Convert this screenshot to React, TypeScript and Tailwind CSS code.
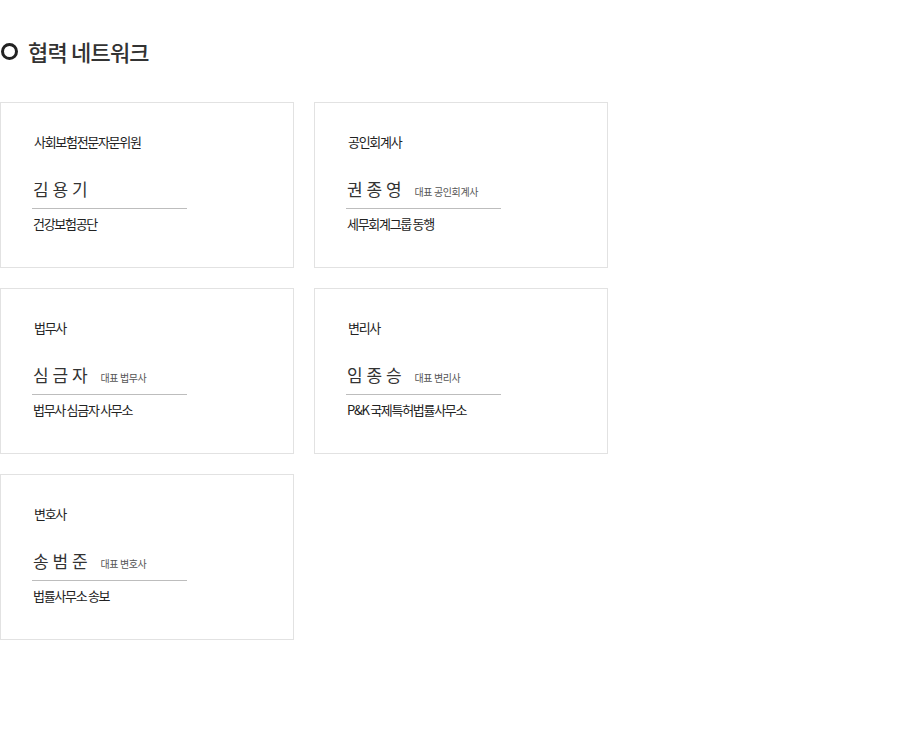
import React from 'react';

type Partner = {
  category: string;
  name: string;
  title?: string;
  org: string;
};

const partners: Partner[] = [
  { category: '사회보험전문자문위원', name: '김 용 기', org: '건강보험공단' },
  { category: '공인회계사', name: '권 종 영', title: '대표 공인회계사', org: '세무회계그룹 동행' },
  { category: '법무사', name: '심 금 자', title: '대표 법무사', org: '법무사 심금자 사무소' },
  { category: '변리사', name: '임 종 승', title: '대표 변리사', org: 'P&K 국제특허법률사무소' },
  { category: '변호사', name: '송 범 준', title: '대표 변호사', org: '법률사무소 송보' },
];

const PartnerCard = ({ partner }: { partner: Partner }) => (
  <div className="h-[166px] border border-[#e2e2e2] bg-white pl-[31px] pt-[29px]">
    <div className="ml-[2px] h-[20px] text-[13px] leading-[20px] tracking-[-1.3px] text-[#222]">
      {partner.category}
    </div>
    <div className="mt-[24px] flex w-[155px] items-baseline border-b border-[#bdbdbd] pb-[6px] pl-[1px]">
      <span className="text-[17px] leading-[26px] text-[#333]">{partner.name}</span>
      {partner.title && (
        <span className="ml-[13px] text-[10px] tracking-[-0.4px] text-[#555]">{partner.title}</span>
      )}
    </div>
    <div className="mt-[5px] pl-[1px] text-[13px] leading-[20px] tracking-[-1.3px] text-[#222]">
      {partner.org}
    </div>
  </div>
);

export default function App() {
  return (
    <div
      className="min-h-[740px] w-full bg-white pt-[36px]"
      style={{ fontFamily: '"Noto Sans CJK KR", "Noto Sans", sans-serif' }}
    >
      {/* Section title */}
      <div className="flex h-[30px] items-center pl-[1px]">
        <span className="h-[17px] w-[17px] rounded-full border-[3px] border-[#222]" />
        <h2 className="ml-[10px] text-[22px] font-medium leading-[30px] tracking-[-0.8px] text-[#333]">
          협력 네트워크
        </h2>
      </div>

      {/* Partner grid */}
      <div className="mt-[36px] grid w-[608px] grid-cols-[294px_294px] gap-5">
        {partners.map((p, i) => (
          <PartnerCard key={i} partner={p} />
        ))}
      </div>
    </div>
  );
}
